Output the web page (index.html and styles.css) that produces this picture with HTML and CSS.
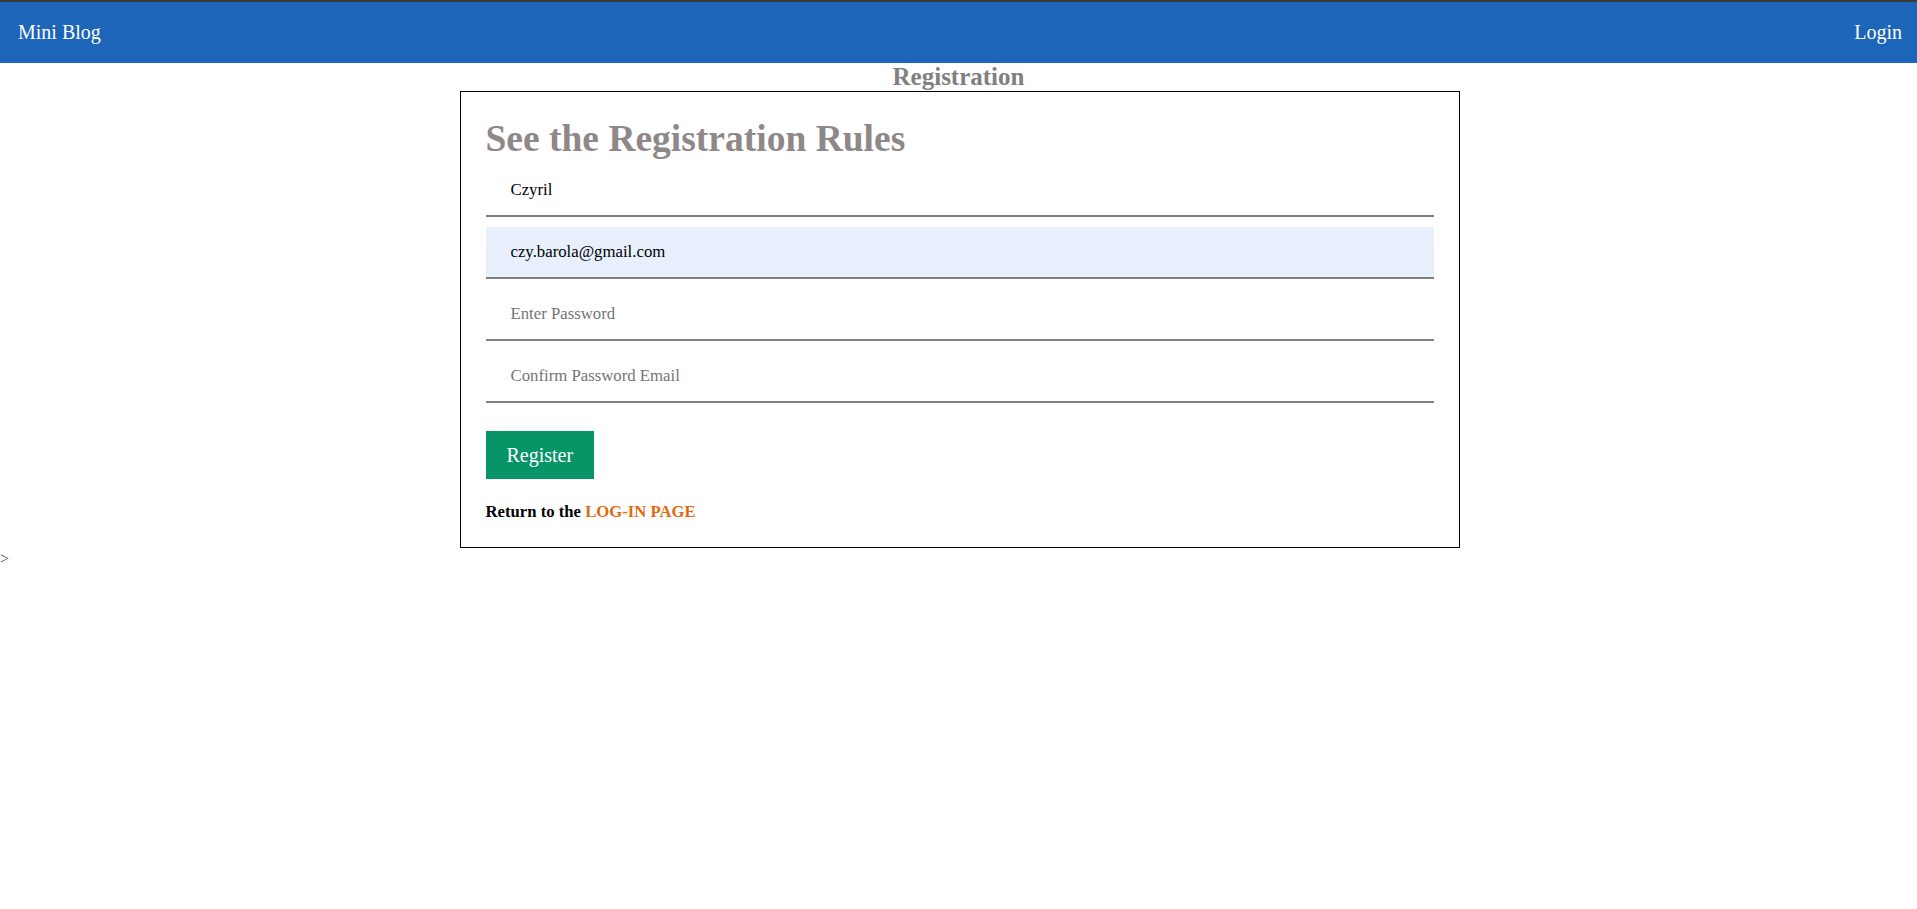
FILE: index.html
```html
<!DOCTYPE html>
<html lang="en">
<head>
<meta charset="utf-8">
<title>Mini Blog - Registration</title>
<link rel="stylesheet" href="styles.css">
</head>
<body>
<nav class="navbar">
  <a class="brand" href="#">Mini Blog</a>
  <a class="nav-link" href="#">Login</a>
</nav>
<h2 class="page-title">Registration</h2>
<div class="card">
  <h1 class="card-title">See the Registration Rules</h1>
  <form class="reg-form">
    <input class="field" type="text" value="Czyril">
    <input class="field field-autofill" type="email" value="czy.barola@gmail.com">
    <input class="field" type="password" placeholder="Enter Password">
    <input class="field" type="password" placeholder="Confirm Password Email">
    <div class="actions">
      <button class="btn-register" type="button">Register</button>
    </div>
  </form>
  <p class="return-text">Return to the <a class="login-link" href="#">LOG-IN PAGE</a></p>
</div>
<div class="stray">&gt;</div>
</body>
</html>
```
FILE: styles.css
```css
* {
  box-sizing: border-box;
}

html, body {
  margin: 0;
  padding: 0;
  background: #ffffff;
}

body {
  font-family: "Liberation Serif", "Times New Roman", serif;
  font-size: 16px;
  color: #000;
}

.navbar {
  display: flex;
  align-items: center;
  justify-content: space-between;
  height: 63px;
  border-top: 2px solid #3a3a3a;
  background: #1d65b9;
  padding: 0 15px 0 18px;
}

.brand,
.nav-link {
  color: #ffffff;
  text-decoration: none;
  font-size: 20px;
}

.page-title {
  margin: 0;
  text-align: center;
  font-size: 25px;
  font-weight: bold;
  color: #808080;
  line-height: 28px;
}

.card {
  width: 1000px;
  margin: 0 auto;
  border: 1px solid #000;
  padding: 25px 25px 26px 25px;
  position: relative;
  left: 1px;
}

.card-title {
  margin: 0;
  font-size: 37.5px;
  line-height: 43px;
  font-weight: bold;
  color: #8f8888;
}

.reg-form {
  display: flex;
  flex-direction: column;
  gap: 10px;
  margin-top: 5px;
}

.field {
  display: block;
  width: 100%;
  height: 52px;
  border: none;
  border-bottom: 2px solid #808080;
  background: #ffffff;
  padding: 0 25px;
  font-family: "Liberation Serif", "Times New Roman", serif;
  font-size: 16.75px;
  color: #000;
  outline: none;
}

.field::placeholder {
  color: #757575;
}

.field-autofill {
  background: #e8f0fe;
}

.actions {
  margin-top: 18px;
}

.btn-register {
  display: inline-block;
  height: 48px;
  padding: 0 21px;
  border: none;
  background: #079467;
  color: #ffffff;
  font-family: "Liberation Serif", "Times New Roman", serif;
  font-size: 20px;
  cursor: pointer;
}

.return-text {
  margin: 23px 0 0 0;
  font-weight: bold;
  font-size: 16.7px;
  line-height: 19px;
}

.login-link {
  color: #e3690f;
  text-decoration: none;
}

.stray {
  color: #555555;
  font-size: 16px;
  line-height: 18px;
  padding-top: 2px;
}
```
